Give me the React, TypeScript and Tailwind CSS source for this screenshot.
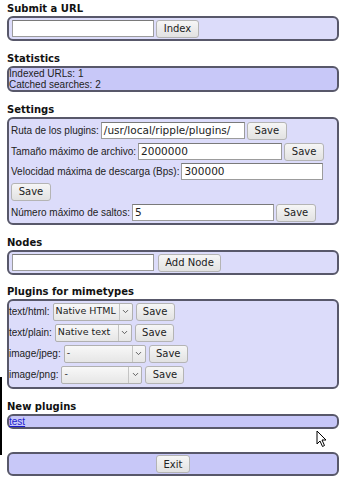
import React from 'react';
import { ChevronDown } from 'lucide-react';

const label = "font-['Liberation_Sans',Arial,sans-serif] text-[10px] text-[#222]";
const ctl = "font-['DejaVu_Sans',Verdana,sans-serif]";

const Box = ({ className, children }: { className: string; children?: React.ReactNode }) => (
  <div className={`border-2 border-[#58586a] rounded-[6px] ${className}`}>{children}</div>
);

const Heading = ({ text, className }: { text: string; className: string }) => (
  <h3 className={`h-[14px] leading-[14px] text-[10px] font-bold text-[#111] ${ctl} ${className}`}>{text}</h3>
);

const Button = ({ text, w }: { text: string; w: string }) => (
  <button
    className={`${w} h-[18px] shrink-0 flex items-center justify-center rounded-[3px] border border-[#b4b4b4] bg-gradient-to-b from-[#f6f6f6] to-[#e2e2e2] text-[10px] text-[#222] ${ctl}`}
  >
    {text}
  </button>
);

const Input = ({ value = '', w }: { value?: string; w: string }) => (
  <div
    className={`${w} h-[17px] shrink-0 flex items-center px-[2px] bg-white border border-[#9c9c9c] border-t-[#7a7a7a] text-[10.5px] text-[#222] leading-none ${ctl}`}
  >
    {value}
  </div>
);

const Select = ({ value, w }: { value: string; w: string }) => (
  <div
    className={`${w} h-[18px] shrink-0 flex items-center rounded-[2px] border border-[#b0b0b0] bg-gradient-to-b from-[#f8f8f8] to-[#e6e6e6] text-[9.5px] text-[#222] ${ctl}`}
  >
    <span className="flex-1 min-w-0 pl-[2px] whitespace-nowrap">{value}</span>
    <span className="w-[13px] shrink-0 h-full flex items-center justify-center border-l border-[#c4c4c4]">
      <ChevronDown size={9} strokeWidth={2.5} className="text-[#555]" />
    </span>
  </div>
);

const Row = ({ children, h = 'h-[21px]' }: { children: React.ReactNode; h?: string }) => (
  <div className={`${h} flex items-center gap-[2px]`}>{children}</div>
);

export default function App() {
  const mimetypes = [
    { type: 'text/html:', value: 'Native HTML', w: 'w-[80px]' },
    { type: 'text/plain:', value: 'Native text', w: 'w-[77px]' },
    { type: 'image/jpeg:', value: '-', w: 'w-[82px]' },
    { type: 'image/png:', value: '-', w: 'w-[81px]' },
  ];

  return (
    <div className="relative w-[346px] h-[480px] bg-white px-[7px] pt-[2px] overflow-hidden">
      {/* Submit a URL */}
      <Heading text="Submit a URL" className="" />
      <Box className="bg-[#dcdcfa] py-[1px] px-[3px]">
        <Row h="h-[19px]">
          <Input w="w-[142px]" />
          <Button text="Index" w="w-[43px]" />
        </Row>
      </Box>

      {/* Statistics */}
      <Heading text="Statistics" className="mt-[11px]" />
      <Box className={`bg-[#c8c8f8] ${label} leading-[11px]`}>
        <div>Indexed URLs: 1</div>
        <div>Catched searches: 2</div>
      </Box>

      {/* Settings */}
      <Heading text="Settings" className="mt-[11px]" />
      <Box className={`bg-[#dcdcfa] pt-[1px] px-[2px] ${label}`}>
        <Row>
          <span>Ruta de los plugins:</span>
          <Input value="/usr/local/ripple/plugins/" w="w-[144px]" />
          <Button text="Save" w="w-[40px]" />
        </Row>
        <Row>
          <span>Tamaño máximo de archivo:</span>
          <Input value="2000000" w="w-[144px]" />
          <Button text="Save" w="w-[40px]" />
        </Row>
        <Row h="h-[19px]">
          <span>Velocidad máxima de descarga (Bps):</span>
          <Input value="300000" w="w-[142px]" />
        </Row>
        <Row>
          <Button text="Save" w="w-[40px]" />
        </Row>
        <Row>
          <span>Número máximo de saltos:</span>
          <Input value="5" w="w-[142px]" />
          <Button text="Save" w="w-[40px]" />
        </Row>
      </Box>

      {/* Nodes */}
      <Heading text="Nodes" className="mt-[11px]" />
      <Box className="bg-[#dcdcfa] py-[1px] px-[3px]">
        <Row h="h-[19px]">
          <Input w="w-[142px]" />
          <Button text="Add Node" w="w-[63px] ml-[2px]" />
        </Row>
      </Box>

      {/* Plugins for mimetypes */}
      <Heading text="Plugins for mimetypes" className="mt-[10px]" />
      <Box className={`bg-[#dcdcfa] pb-[2px] ${label}`}>
        {mimetypes.map((m) => (
          <Row key={m.type}>
            <span className="mr-[1px]">{m.type}</span>
            <Select value={m.value} w={m.w} />
            <Button text="Save" w="w-[39px] ml-[1px]" />
          </Row>
        ))}
      </Box>

      {/* New plugins */}
      <Heading text="New plugins" className="mt-[11px]" />
      <Box className={`bg-[#c6c6f8] ${label} leading-[11px]`}>
        <a className="text-[#1a1acc] underline">test</a>
      </Box>

      {/* Exit */}
      <Box className="bg-[#c8c8f8] mt-[23px] py-[1px] flex justify-center">
        <Button text="Exit" w="w-[34px] h-[17px]" />
      </Box>

      {/* screenshot artifacts: left edge strip and mouse pointer */}
      <div className="absolute left-0 top-[377px] w-[2px] h-[78px] bg-black" />
      <svg className="absolute left-[316px] top-[430px]" width="12" height="18" viewBox="0 0 12 18">
        <path d="M1 1 L1 14 L4 11 L6.5 16.5 L8.5 15.5 L6 10 L10 10 Z" fill="#fff" stroke="#000" strokeWidth="1" strokeLinejoin="round" />
      </svg>
    </div>
  );
}
